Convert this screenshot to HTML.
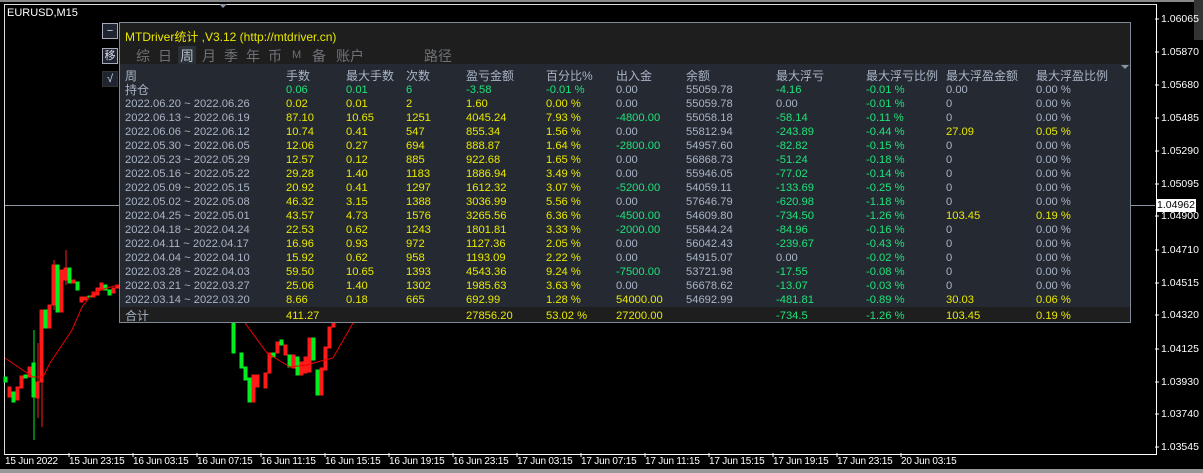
<!DOCTYPE html>
<html><head><meta charset="utf-8"><style>
body{margin:0;width:1203px;height:473px;background:#000;overflow:hidden;position:relative;font-family:"Liberation Sans","Noto Sans CJK SC",sans-serif;}
.abs{position:absolute}
.pl{position:absolute;left:1161px;color:#fff;font-size:10.5px}
.tl{position:absolute;top:456px;color:#fff;font-size:10px;letter-spacing:-0.2px}
#panel{position:absolute;left:119px;top:22px;width:1010px;height:299px;border:1px solid #7e8a98;background:#1e1e1e}
#tbl{position:absolute;left:0;top:41px;width:1010px;height:243px;background:#252a32}
.r{position:absolute;left:0;width:1010px;height:14px;font-size:11.2px;line-height:14px;white-space:nowrap}
.r span{position:absolute;top:0}
.c0{left:5px}.c1{left:166px}.c2{left:226px}.c3{left:286px}.c4{left:346px}.c5{left:426px}.c6{left:496px}.c7{left:566px}.c8{left:656px}.c9{left:746px}.c10{left:826px}.c11{left:916px}
.g{color:#a9b4c6}.y{color:#e8e800}.n{color:#1ee37a}
.btn{position:absolute;left:102px;width:14px;height:14px;border:1px solid #aab;background:#1f2530;color:#dde;font-size:11px;line-height:14px;text-align:center}
.tab{position:absolute;top:23px;font-size:14px;color:#6e7278}
</style></head><body>
<div class="abs" style="left:0;top:0;width:1203px;height:2px;background:#888"></div>
<div class="abs" style="left:4px;top:4px;width:1151px;height:449px;border-left:1px solid #ddd;border-top:1px solid #ddd;border-right:1px solid #fff;border-bottom:1px solid #fff"></div>
<div class="abs" style="left:1194px;top:0;width:9px;height:40px;background:#333"></div>
<div class="abs" style="left:0;top:469px;width:1203px;height:4px;background:#999"></div>
<div class="abs" style="left:5px;top:205px;width:1150px;height:1px;background:#8a95a3"></div>
<div class="abs" style="left:7px;top:7px;color:#fff;font-size:11px">EURUSD,M15</div>
<svg class="abs" style="left:0;top:0" width="1203" height="473">
<polygon points="219,4 227,4 223,8" fill="#8a95a3"/>
<g fill="#ff1a1a" stroke="#ff1a1a" stroke-width="1">
<line x1="38" y1="343" x2="38" y2="418"/><line x1="42" y1="330" x2="42" y2="427"/><line x1="54" y1="260" x2="54" y2="310"/><line x1="66" y1="250" x2="66" y2="285"/>
<rect x="8" y="387" width="3" height="10"/><rect x="16" y="387" width="3" height="13"/><rect x="20" y="376" width="3" height="12"/><rect x="28" y="367" width="3" height="10"/><rect x="36" y="382" width="3" height="16"/><rect x="40" y="310" width="3" height="72"/><rect x="48" y="305" width="3" height="23"/><rect x="52" y="265" width="3" height="40"/><rect x="60" y="270" width="3" height="42"/><rect x="64" y="268" width="3" height="12"/><rect x="72" y="280" width="3" height="3"/><rect x="80" y="297" width="3" height="5"/><rect x="84" y="297" width="3" height="3"/><rect x="92" y="292" width="3" height="5"/><rect x="96" y="288" width="3" height="7"/><rect x="100" y="283" width="3" height="7"/><rect x="112" y="288" width="3" height="5"/><rect x="116" y="285" width="3" height="3"/>
<rect x="252" y="375" width="3" height="27"/><rect x="256" y="375" width="3" height="12"/><rect x="264" y="373" width="3" height="15"/><rect x="268" y="353" width="3" height="20"/><rect x="276" y="342" width="3" height="11"/><rect x="284" y="345" width="3" height="10"/><rect x="292" y="355" width="3" height="13"/><rect x="300" y="362" width="3" height="13"/><rect x="304" y="357" width="3" height="16"/><rect x="308" y="338" width="3" height="34"/><rect x="320" y="368" width="3" height="27"/><rect x="324" y="347" width="3" height="23"/><rect x="328" y="327" width="3" height="21"/><rect x="332" y="322" width="3" height="5"/>
</g>
<g fill="#00ee22" stroke="#00ee22" stroke-width="1">
<line x1="34" y1="330" x2="34" y2="440"/>
<rect x="4" y="377" width="3" height="5"/><rect x="12" y="392" width="3" height="10"/><rect x="24" y="375" width="3" height="3"/><rect x="32" y="363" width="3" height="34"/><rect x="44" y="310" width="3" height="18"/><rect x="56" y="265" width="3" height="47"/><rect x="68" y="268" width="3" height="15"/><rect x="76" y="282" width="3" height="8"/><rect x="88" y="296" width="3" height="1"/><rect x="104" y="285" width="3" height="5"/><rect x="108" y="290" width="3" height="5"/>
<rect x="232" y="322" width="3" height="31"/><rect x="240" y="353" width="3" height="15"/><rect x="244" y="367" width="3" height="13"/><rect x="248" y="378" width="3" height="24"/><rect x="272" y="353" width="3" height="4"/><rect x="280" y="340" width="3" height="5"/><rect x="288" y="355" width="3" height="12"/><rect x="296" y="357" width="3" height="18"/><rect x="312" y="338" width="3" height="22"/><rect x="316" y="370" width="3" height="25"/>
</g>
<polyline fill="none" stroke="#e00" stroke-width="1" points="5,358 33,377 43,377 50,363 72,330 82,307 93,293 107,288 118,285"/>
<polyline fill="none" stroke="#e00" stroke-width="1" points="245,323 267,353 290,367 307,365 317,362 333,358 353,323"/>
<g stroke="#fff"><line x1="1155" y1="19" x2="1159" y2="19"/><line x1="1155" y1="52" x2="1159" y2="52"/><line x1="1155" y1="85" x2="1159" y2="85"/><line x1="1155" y1="118" x2="1159" y2="118"/><line x1="1155" y1="151" x2="1159" y2="151"/><line x1="1155" y1="184" x2="1159" y2="184"/><line x1="1155" y1="216" x2="1159" y2="216"/><line x1="1155" y1="250" x2="1159" y2="250"/><line x1="1155" y1="283" x2="1159" y2="283"/><line x1="1155" y1="315" x2="1159" y2="315"/><line x1="1155" y1="349" x2="1159" y2="349"/><line x1="1155" y1="382" x2="1159" y2="382"/><line x1="1155" y1="414" x2="1159" y2="414"/><line x1="1155" y1="447" x2="1159" y2="447"/>
<line x1="69" y1="453" x2="69" y2="457"/><line x1="133" y1="453" x2="133" y2="457"/><line x1="197" y1="453" x2="197" y2="457"/><line x1="261" y1="453" x2="261" y2="457"/><line x1="325" y1="453" x2="325" y2="457"/><line x1="389" y1="453" x2="389" y2="457"/><line x1="453" y1="453" x2="453" y2="457"/><line x1="517" y1="453" x2="517" y2="457"/><line x1="581" y1="453" x2="581" y2="457"/><line x1="645" y1="453" x2="645" y2="457"/><line x1="709" y1="453" x2="709" y2="457"/><line x1="773" y1="453" x2="773" y2="457"/><line x1="837" y1="453" x2="837" y2="457"/><line x1="901" y1="453" x2="901" y2="457"/></g>
</svg>
<div class="pl" style="top:13px">1.06065</div><div class="pl" style="top:46px">1.05870</div><div class="pl" style="top:79px">1.05680</div><div class="pl" style="top:112px">1.05485</div><div class="pl" style="top:145px">1.05290</div><div class="pl" style="top:178px">1.05095</div><div class="pl" style="top:210px">1.04900</div><div class="pl" style="top:244px">1.04710</div><div class="pl" style="top:277px">1.04515</div><div class="pl" style="top:309px">1.04320</div><div class="pl" style="top:343px">1.04125</div><div class="pl" style="top:376px">1.03930</div><div class="pl" style="top:408px">1.03740</div><div class="pl" style="top:441px">1.03545</div>
<div class="abs" style="left:1156px;top:199px;width:40px;height:13px;background:#fff;color:#000;font-size:10.5px;line-height:13px;text-align:center">1.04962</div>
<div class="tl" style="left:5px">15 Jun 2022</div><div class="tl" style="left:69px">15 Jun 23:15</div><div class="tl" style="left:133px">16 Jun 03:15</div><div class="tl" style="left:197px">16 Jun 07:15</div><div class="tl" style="left:261px">16 Jun 11:15</div><div class="tl" style="left:325px">16 Jun 15:15</div><div class="tl" style="left:389px">16 Jun 19:15</div><div class="tl" style="left:453px">16 Jun 23:15</div><div class="tl" style="left:517px">17 Jun 03:15</div><div class="tl" style="left:581px">17 Jun 07:15</div><div class="tl" style="left:645px">17 Jun 11:15</div><div class="tl" style="left:709px">17 Jun 15:15</div><div class="tl" style="left:773px">17 Jun 19:15</div><div class="tl" style="left:837px">17 Jun 23:15</div><div class="tl" style="left:901px">20 Jun 03:15</div>
<div class="btn" style="top:23px">−</div><div class="btn" style="top:48px">移</div><div class="btn" style="top:71px;border-color:#333">√</div>
<div id="panel">
<div class="abs" style="left:5px;top:5px;color:#e8e800;font-size:12px">MTDriver统计 ,V3.12 (http://mtdriver.cn)</div>
<div class="abs" style="left:58px;top:23px;width:18px;height:18px;background:#2a3038"></div>
<div class="tab" style="left:16px">综</div><div class="tab" style="left:38px">日</div><div class="tab" style="left:60px;color:#b5bcc8">周</div><div class="tab" style="left:82px">月</div><div class="tab" style="left:104px">季</div><div class="tab" style="left:126px">年</div><div class="tab" style="left:148px">币</div><div class="tab" style="left:172px;font-size:11px;top:26px">M</div><div class="tab" style="left:192px">备</div><div class="tab" style="left:216px">账户</div><div class="tab" style="left:304px">路径</div>
<div id="tbl">
<svg class="abs" style="left:1001px;top:1px" width="8" height="5"><polygon points="0,0 8,0 4,4" fill="#8a95a3"/></svg>
<div class="r g" style="top:5px;font-size:12px"><span class="c0">周</span><span class="c1">手数</span><span class="c2">最大手数</span><span class="c3">次数</span><span class="c4">盈亏金额</span><span class="c5">百分比%</span><span class="c6">出入金</span><span class="c7">余额</span><span class="c8">最大浮亏</span><span class="c9">最大浮亏比例</span><span class="c10">最大浮盈金额</span><span class="c11">最大浮盈比例</span></div>
<div class="r" style="top:19px"><span class="c0 g" style="font-size:12px">持仓</span><span class="c1 n">0.06</span><span class="c2 n">0.01</span><span class="c3 n">6</span><span class="c4 n">-3.58</span><span class="c5 n">-0.01 %</span><span class="c6 g">0.00</span><span class="c7 g">55059.78</span><span class="c8 n">-4.16</span><span class="c9 n">-0.01 %</span><span class="c10 g">0.00</span><span class="c11 g">0.00 %</span></div>
<div class="r" style="top:33px"><span class="c0 g">2022.06.20 ~ 2022.06.26</span><span class="c1 y">0.02</span><span class="c2 y">0.01</span><span class="c3 y">2</span><span class="c4 y">1.60</span><span class="c5 y">0.00 %</span><span class="c6 g">0.00</span><span class="c7 g">55059.78</span><span class="c8 g">0.00</span><span class="c9 n">-0.01 %</span><span class="c10 g">0</span><span class="c11 g">0.00 %</span></div>
<div class="r" style="top:47px"><span class="c0 g">2022.06.13 ~ 2022.06.19</span><span class="c1 y">87.10</span><span class="c2 y">10.65</span><span class="c3 y">1251</span><span class="c4 y">4045.24</span><span class="c5 y">7.93 %</span><span class="c6 n">-4800.00</span><span class="c7 g">55058.18</span><span class="c8 n">-58.14</span><span class="c9 n">-0.11 %</span><span class="c10 g">0</span><span class="c11 g">0.00 %</span></div>
<div class="r" style="top:61px"><span class="c0 g">2022.06.06 ~ 2022.06.12</span><span class="c1 y">10.74</span><span class="c2 y">0.41</span><span class="c3 y">547</span><span class="c4 y">855.34</span><span class="c5 y">1.56 %</span><span class="c6 g">0.00</span><span class="c7 g">55812.94</span><span class="c8 n">-243.89</span><span class="c9 n">-0.44 %</span><span class="c10 y">27.09</span><span class="c11 y">0.05 %</span></div>
<div class="r" style="top:75px"><span class="c0 g">2022.05.30 ~ 2022.06.05</span><span class="c1 y">12.06</span><span class="c2 y">0.27</span><span class="c3 y">694</span><span class="c4 y">888.87</span><span class="c5 y">1.64 %</span><span class="c6 n">-2800.00</span><span class="c7 g">54957.60</span><span class="c8 n">-82.82</span><span class="c9 n">-0.15 %</span><span class="c10 g">0</span><span class="c11 g">0.00 %</span></div>
<div class="r" style="top:89px"><span class="c0 g">2022.05.23 ~ 2022.05.29</span><span class="c1 y">12.57</span><span class="c2 y">0.12</span><span class="c3 y">885</span><span class="c4 y">922.68</span><span class="c5 y">1.65 %</span><span class="c6 g">0.00</span><span class="c7 g">56868.73</span><span class="c8 n">-51.24</span><span class="c9 n">-0.18 %</span><span class="c10 g">0</span><span class="c11 g">0.00 %</span></div>
<div class="r" style="top:103px"><span class="c0 g">2022.05.16 ~ 2022.05.22</span><span class="c1 y">29.28</span><span class="c2 y">1.40</span><span class="c3 y">1183</span><span class="c4 y">1886.94</span><span class="c5 y">3.49 %</span><span class="c6 g">0.00</span><span class="c7 g">55946.05</span><span class="c8 n">-77.02</span><span class="c9 n">-0.14 %</span><span class="c10 g">0</span><span class="c11 g">0.00 %</span></div>
<div class="r" style="top:117px"><span class="c0 g">2022.05.09 ~ 2022.05.15</span><span class="c1 y">20.92</span><span class="c2 y">0.41</span><span class="c3 y">1297</span><span class="c4 y">1612.32</span><span class="c5 y">3.07 %</span><span class="c6 n">-5200.00</span><span class="c7 g">54059.11</span><span class="c8 n">-133.69</span><span class="c9 n">-0.25 %</span><span class="c10 g">0</span><span class="c11 g">0.00 %</span></div>
<div class="r" style="top:131px"><span class="c0 g">2022.05.02 ~ 2022.05.08</span><span class="c1 y">46.32</span><span class="c2 y">3.15</span><span class="c3 y">1388</span><span class="c4 y">3036.99</span><span class="c5 y">5.56 %</span><span class="c6 g">0.00</span><span class="c7 g">57646.79</span><span class="c8 n">-620.98</span><span class="c9 n">-1.18 %</span><span class="c10 g">0</span><span class="c11 g">0.00 %</span></div>
<div class="r" style="top:145px"><span class="c0 g">2022.04.25 ~ 2022.05.01</span><span class="c1 y">43.57</span><span class="c2 y">4.73</span><span class="c3 y">1576</span><span class="c4 y">3265.56</span><span class="c5 y">6.36 %</span><span class="c6 n">-4500.00</span><span class="c7 g">54609.80</span><span class="c8 n">-734.50</span><span class="c9 n">-1.26 %</span><span class="c10 y">103.45</span><span class="c11 y">0.19 %</span></div>
<div class="r" style="top:159px"><span class="c0 g">2022.04.18 ~ 2022.04.24</span><span class="c1 y">22.53</span><span class="c2 y">0.62</span><span class="c3 y">1243</span><span class="c4 y">1801.81</span><span class="c5 y">3.33 %</span><span class="c6 n">-2000.00</span><span class="c7 g">55844.24</span><span class="c8 n">-84.96</span><span class="c9 n">-0.16 %</span><span class="c10 g">0</span><span class="c11 g">0.00 %</span></div>
<div class="r" style="top:173px"><span class="c0 g">2022.04.11 ~ 2022.04.17</span><span class="c1 y">16.96</span><span class="c2 y">0.93</span><span class="c3 y">972</span><span class="c4 y">1127.36</span><span class="c5 y">2.05 %</span><span class="c6 g">0.00</span><span class="c7 g">56042.43</span><span class="c8 n">-239.67</span><span class="c9 n">-0.43 %</span><span class="c10 g">0</span><span class="c11 g">0.00 %</span></div>
<div class="r" style="top:187px"><span class="c0 g">2022.04.04 ~ 2022.04.10</span><span class="c1 y">15.92</span><span class="c2 y">0.62</span><span class="c3 y">958</span><span class="c4 y">1193.09</span><span class="c5 y">2.22 %</span><span class="c6 g">0.00</span><span class="c7 g">54915.07</span><span class="c8 g">0.00</span><span class="c9 n">-0.02 %</span><span class="c10 g">0</span><span class="c11 g">0.00 %</span></div>
<div class="r" style="top:201px"><span class="c0 g">2022.03.28 ~ 2022.04.03</span><span class="c1 y">59.50</span><span class="c2 y">10.65</span><span class="c3 y">1393</span><span class="c4 y">4543.36</span><span class="c5 y">9.24 %</span><span class="c6 n">-7500.00</span><span class="c7 g">53721.98</span><span class="c8 n">-17.55</span><span class="c9 n">-0.08 %</span><span class="c10 g">0</span><span class="c11 g">0.00 %</span></div>
<div class="r" style="top:215px"><span class="c0 g">2022.03.21 ~ 2022.03.27</span><span class="c1 y">25.06</span><span class="c2 y">1.40</span><span class="c3 y">1302</span><span class="c4 y">1985.63</span><span class="c5 y">3.63 %</span><span class="c6 g">0.00</span><span class="c7 g">56678.62</span><span class="c8 n">-13.07</span><span class="c9 n">-0.03 %</span><span class="c10 g">0</span><span class="c11 g">0.00 %</span></div>
<div class="r" style="top:229px"><span class="c0 g">2022.03.14 ~ 2022.03.20</span><span class="c1 y">8.66</span><span class="c2 y">0.18</span><span class="c3 y">665</span><span class="c4 y">692.99</span><span class="c5 y">1.28 %</span><span class="c6 y">54000.00</span><span class="c7 g">54692.99</span><span class="c8 n">-481.81</span><span class="c9 n">-0.89 %</span><span class="c10 y">30.03</span><span class="c11 y">0.06 %</span></div>
</div>
<div class="r" style="top:286px"><span class="c0 g" style="font-size:12px">合计</span><span class="c1 y">411.27</span><span class="c4 y">27856.20</span><span class="c5 y">53.02 %</span><span class="c6 y">27200.00</span><span class="c8 n">-734.5</span><span class="c9 n">-1.26 %</span><span class="c10 y">103.45</span><span class="c11 y">0.19 %</span></div>
</div>
</body></html>
